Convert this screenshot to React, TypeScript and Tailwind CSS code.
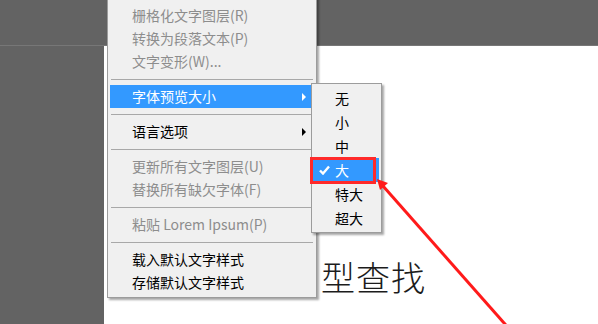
import type { ReactNode } from 'react';

const font = { fontFamily: '"Noto Sans CJK SC", "Noto Sans", sans-serif' };

type Entry =
  | { kind: 'item'; label: string; disabled?: boolean; active?: boolean; sub?: boolean }
  | { kind: 'sep' };

const menu: Entry[] = [
  { kind: 'item', label: '栅格化文字图层(R)', disabled: true },
  { kind: 'item', label: '转换为段落文本(P)', disabled: true },
  { kind: 'item', label: '文字变形(W)...', disabled: true },
  { kind: 'sep' },
  { kind: 'item', label: '字体预览大小', active: true, sub: true },
  { kind: 'sep' },
  { kind: 'item', label: '语言选项', sub: true },
  { kind: 'sep' },
  { kind: 'item', label: '更新所有文字图层(U)', disabled: true },
  { kind: 'item', label: '替换所有缺欠字体(F)', disabled: true },
  { kind: 'sep' },
  { kind: 'item', label: '粘贴 Lorem Ipsum(P)', disabled: true },
  { kind: 'sep' },
  { kind: 'item', label: '载入默认文字样式' },
  { kind: 'item', label: '存储默认文字样式' },
];

const sizes = ['无', '小', '中', '大', '特大', '超大'];

function Caret({ white }: { white?: boolean }) {
  return (
    <svg width="4" height="8" viewBox="0 0 4 8" className="shrink-0">
      <polygon points="0,0 4,4 0,8" fill={white ? '#ffffff' : '#000000'} />
    </svg>
  );
}

function Row({ children, active, disabled }: { children: ReactNode; active?: boolean; disabled?: boolean }) {
  return (
    <div
      className={`h-[23px] ml-[2px] mr-[5px] pl-[22px] pr-[5px] flex items-center justify-between text-[14px] ${
        active ? 'bg-[#3399ff] text-white' : disabled ? 'text-[#8d8d8d]' : 'text-black'
      }`}
    >
      {children}
    </div>
  );
}

export default function App() {
  return (
    <div className="relative w-[598px] h-[324px] overflow-hidden bg-[#636363]" style={font}>
      {/* workspace */}
      <div className="flex flex-col h-full">
        <div className="h-[46px] border-b border-[#777777] shrink-0" />
        <div className="flex flex-1">
          <div className="w-[104px] shrink-0" />
          <div className="flex-1 bg-white pl-[217px] pt-[214px]">
            <div className="text-[34px] leading-none text-[#1c1c1c] font-light tracking-[1px]">型查找</div>
          </div>
        </div>
      </div>

      {/* context menu */}
      <div className="absolute left-[107px] top-[-10px] w-[210px] bg-[#f0f0f0] border border-[#9c9c9c] pt-[13px] pb-[3px] shadow-[2px_2px_2px_rgba(0,0,0,0.35)]">
        {menu.map((e, i) =>
          e.kind === 'sep' ? (
            <div key={i} className="h-[12px] flex items-center mx-[3px]">
              <div className="w-full h-px bg-[#a8a8a8]" />
            </div>
          ) : (
            <Row key={i} active={e.active} disabled={e.disabled}>
              <span>{e.label}</span>
              {e.sub && <Caret white={e.active} />}
            </Row>
          )
        )}
      </div>

      {/* submenu */}
      <div className="absolute left-[311px] top-[83px] w-[71px] bg-[#f0f0f0] border border-[#9c9c9c] pt-[2px] pb-[2px] shadow-[2px_2px_2px_rgba(0,0,0,0.35)]">
        {sizes.map((s) => {
          const on = s === '大';
          return (
            <div
              key={s}
              className={`h-[24px] ml-[1px] mr-[2px] flex items-center text-[14px] ${on ? 'bg-[#3399ff] text-white' : 'text-black'}`}
            >
              <span className="w-[22px] flex justify-center">
                {on && (
                  <svg width="11" height="10" viewBox="0 0 11 10">
                    <path d="M1 5.5 L4 8.5 L10 1.5" fill="none" stroke="#ffffff" strokeWidth="2.4" />
                  </svg>
                )}
              </span>
              <span>{s}</span>
            </div>
          );
        })}
      </div>

      {/* red annotation */}
      <div className="absolute left-[310px] top-[157px] w-[66px] h-[27px] border-[3px] border-[#ff2a2a]" />
      <svg className="absolute inset-0 pointer-events-none" width="598" height="324">
        <line x1="383" y1="186" x2="512" y2="332" stroke="#ff1a1a" strokeWidth="3" />
        <polygon points="377,179 380,190 388,183" fill="#ff1a1a" />
      </svg>
    </div>
  );
}
